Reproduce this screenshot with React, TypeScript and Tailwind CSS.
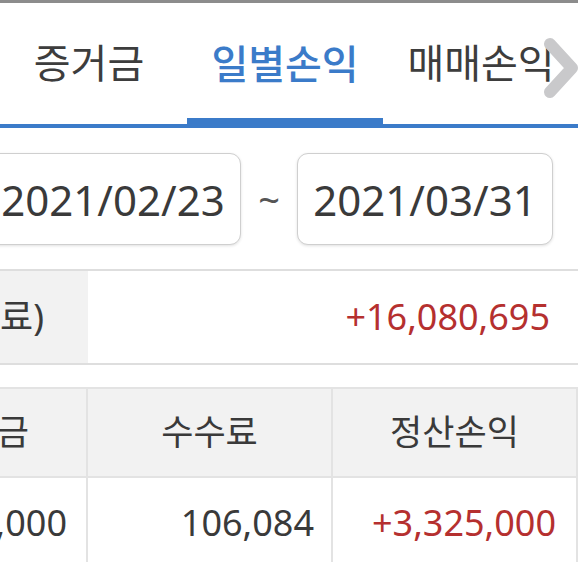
import { ReactNode } from "react"

const font = { fontFamily: '"Noto Sans", "Noto Sans CJK KR", sans-serif' }

function Tab({ label, active }: { label: string; active?: boolean }) {
  return (
    <div
      className={
        "flex h-[121px] w-[196px] shrink-0 items-center justify-center pb-[2px] text-[40px] " +
        (active ? "border-b-[6px] border-[#3b7bc9] pt-[8px] font-medium text-[#3b7bc9]" : "text-[#3d3d3d]")
      }
    >
      {label}
    </div>
  )
}

function DateBox({ value }: { value: string }) {
  return (
    <div className="flex h-[92px] w-[256px] shrink-0 items-center justify-center rounded-[11px] border border-[#cfcfcf] bg-white text-[42px] text-[#3a3a3a] shadow-[0_1px_3px_rgba(0,0,0,0.12)]">
      {value}
    </div>
  )
}

function Cell({ children, className }: { children: ReactNode; className?: string }) {
  return (
    <div className={"flex w-[245px] shrink-0 items-center border-r-2 border-[#e3e3e3] " + (className ?? "")}>
      {children}
    </div>
  )
}

export default function App() {
  return (
    <div className="relative h-[562px] w-[578px] overflow-hidden bg-white" style={font}>
      <div className="h-[3px] bg-[#8c8c8c]" />

      {/* tabs */}
      <div className="relative border-b-[4px] border-[#3b7bc9]">
        <div className="ml-[-9px] flex items-end">
          <Tab label="증거금" />
          <Tab label="일별손익" active />
          <Tab label="매매손익" />
        </div>
        <svg className="absolute right-0 top-[34px]" width="36" height="62" viewBox="0 0 36 62">
          <path d="M8 7 L30 31 L8 55" fill="none" stroke="#c9c9cb" strokeWidth="12" strokeLinecap="round" strokeLinejoin="round" />
        </svg>
      </div>

      {/* period */}
      <div className="ml-[-15px] flex items-center pt-[25px] pb-[24px]">
        <DateBox value="2021/02/23" />
        <div className="flex w-[56px] justify-center text-[38px] text-[#555]">~</div>
        <DateBox value="2021/03/31" />
      </div>

      {/* summary */}
      <div className="flex h-[96px] border-y-2 border-[#dedede]">
        <div className="ml-[-157px] flex w-[245px] shrink-0 items-center justify-end bg-[#f2f2f2] pr-[44px] text-[36px] text-[#3a3a3a]">
          손익(수수료)
        </div>
        <div className="flex flex-1 items-center justify-end pr-[28px] text-[36px] text-[#b5302f]">
          +16,080,695
        </div>
      </div>

      {/* table */}
      <div className="mt-[22px] border-t-2 border-[#e3e3e3]">
        <div className="ml-[-157px] flex h-[89px] border-b-2 border-[#e3e3e3] bg-[#f2f2f2] text-[35px] text-[#3a3a3a]">
          <Cell className="justify-center">매매대금</Cell>
          <Cell className="justify-center">수수료</Cell>
          <Cell className="justify-center">정산손익</Cell>
        </div>
        <div className="ml-[-157px] flex h-[90px] text-[36px]">
          <Cell className="justify-end pr-[19px] text-[#3a3a3a]">5,000,000</Cell>
          <Cell className="justify-end pr-[17px] text-[#3a3a3a]">106,084</Cell>
          <Cell className="justify-end pr-[20px] text-[#b5302f]">+3,325,000</Cell>
        </div>
      </div>
    </div>
  )
}
